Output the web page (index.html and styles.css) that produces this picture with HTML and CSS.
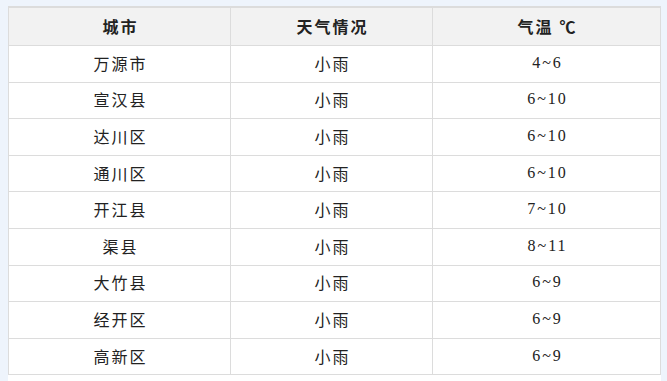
FILE: index.html
```html
<!DOCTYPE html>
<html lang="zh">
<head>
<meta charset="utf-8">
<link rel="stylesheet" href="styles.css">
</head>
<body>
<div class="page">
  <table class="weather">
    <thead>
      <tr><th>城市</th><th>天气情况</th><th>气温 ℃</th></tr>
    </thead>
    <tbody>
      <tr><td>万源市</td><td>小雨</td><td>4~6</td></tr>
      <tr><td>宣汉县</td><td>小雨</td><td>6~10</td></tr>
      <tr><td>达川区</td><td>小雨</td><td>6~10</td></tr>
      <tr><td>通川区</td><td>小雨</td><td>6~10</td></tr>
      <tr><td>开江县</td><td>小雨</td><td>7~10</td></tr>
      <tr><td>渠县</td><td>小雨</td><td>8~11</td></tr>
      <tr><td>大竹县</td><td>小雨</td><td>6~9</td></tr>
      <tr><td>经开区</td><td>小雨</td><td>6~9</td></tr>
      <tr><td>高新区</td><td>小雨</td><td>6~9</td></tr>
    </tbody>
  </table>
</div>
</body>
</html>
```
FILE: styles.css
```css
html, body {
  margin: 0;
  padding: 0;
  background: #eef4fc;
  height: 100%;
}
.page {
  margin-left: 8px;
  margin-top: 6px;
  width: 653px;
  background: #ffffff;
  min-height: 375px;
}
.weather {
  width: 653px;
  border-collapse: collapse;
  font-family: "Liberation Serif", "Noto Sans CJK SC", sans-serif;
  font-size: 16px;
  letter-spacing: 2px;
  color: #222;
  text-align: center;
}
.weather th, .weather td {
  border: 1px solid #dcdcdc;
  padding: 0 0 2px 2px;
}
.weather thead th {
  border-top: 2px solid #dcdcdc;
  background: #f2f2f2;
  height: 35px;
  font-weight: bold;
}
.weather th:nth-child(1) { width: 219px; }
.weather th:nth-child(2) { width: 199px; }
.weather tbody td {
  height: 33.6px;
}
```
